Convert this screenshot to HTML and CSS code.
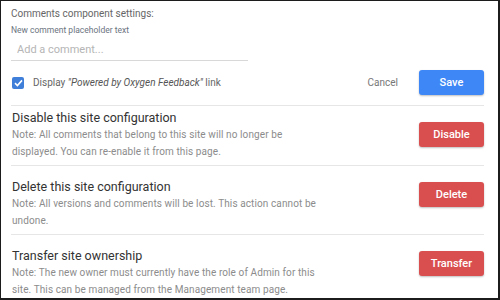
FILE: index.html
```html
<!DOCTYPE html>
<html lang="en">
<head>
    <meta charset="UTF-8">
    <meta name="viewport" content="width=device-width, initial-scale=1.0">
    <title>Site settings</title>
    <link rel="stylesheet" href="styles.css">
</head>
<body>
    <div class="frame">
        <div class="comments-settings">
            <div class="settings-title">Comments component settings:</div>
            <label class="field-label" for="placeholderInput">New comment placeholder text</label>
            <input type="text" id="placeholderInput" class="text-input" placeholder="Add a comment...">
            <div class="form-row">
                <label class="checkbox-label">
                    <span class="checkbox">
                        <svg width="9" height="8" viewBox="0 0 9 8"><path d="M1 4.2 L3.4 6.5 L8 1.4" fill="none" stroke="#fff" stroke-width="1.6"/></svg>
                    </span>
                    <span>Display <em>"Powered by Oxygen Feedback"</em> link</span>
                </label>
                <button class="btn-link">Cancel</button>
                <button class="btn btn-primary">Save</button>
            </div>
        </div>

        <div class="section section-first">
            <div class="section-text">
                <div class="section-title">Disable this site configuration</div>
                <p class="note">Note: All comments that belong to this site will no longer be displayed. You can re-enable it from this page.</p>
            </div>
            <button class="btn btn-danger">Disable</button>
        </div>

        <div class="section">
            <div class="section-text">
                <div class="section-title">Delete this site configuration</div>
                <p class="note">Note: All versions and comments will be lost. This action cannot be undone.</p>
            </div>
            <button class="btn btn-danger">Delete</button>
        </div>

        <div class="section">
            <div class="section-text">
                <div class="section-title">Transfer site ownership</div>
                <p class="note">Note: The new owner must currently have the role of Admin for this site. This can be managed from the Management team page.</p>
            </div>
            <button class="btn btn-danger">Transfer</button>
        </div>
    </div>
</body>
</html>
```

FILE: styles.css
```css
body {
    margin: 0;
    padding: 0;
    font-family: Roboto, "Liberation Sans", sans-serif;
    background-color: white;
}
.frame {
    box-sizing: border-box;
    width: 500px;
    height: 300px;
    overflow: hidden;
    border: 1px solid #1c1c1c;
    border-right-width: 2px;
    border-bottom-width: 2px;
    padding: 0 14px 0 10px;
}
.comments-settings {
    padding-top: 5px;
}
.settings-title {
    font-size: 10px;
    line-height: 15px;
    color: #666;
}
.field-label {
    display: block;
    font-size: 8.5px;
    line-height: 12px;
    margin-top: 3px;
    color: #6b7480;
}
.text-input {
    display: block;
    box-sizing: border-box;
    width: 237px;
    height: 23px;
    margin-top: 2px;
    padding: 0 6px;
    border: none;
    border-bottom: 1px solid #d8d8d8;
    font-family: inherit;
    font-size: 11px;
    color: #333;
    outline: none;
}
.text-input::placeholder {
    color: #b5b5b5;
}
.form-row {
    display: flex;
    align-items: center;
    margin-top: 9px;
    padding-bottom: 10px;
    border-bottom: 1px solid #e6e6e6;
}
.checkbox-label {
    display: flex;
    align-items: center;
    flex: 1;
    font-size: 10px;
    color: #666;
}
.checkbox-label em {
    color: #555;
}
.checkbox {
    display: flex;
    align-items: center;
    justify-content: center;
    width: 12px;
    height: 12px;
    margin: 0 9px 0 1px;
    border-radius: 2px;
    background-color: #3f7fd9;
}
.btn-link {
    background: none;
    border: none;
    padding: 0;
    margin-right: 21px;
    font-family: inherit;
    font-size: 10px;
    color: #777;
    cursor: pointer;
}
.btn {
    width: 65px;
    height: 25px;
    border: none;
    border-radius: 3px;
    font-family: inherit;
    font-size: 11px;
    font-weight: 500;
    color: white;
    cursor: pointer;
    box-shadow: 0 1px 2px rgba(0, 0, 0, 0.25);
}
.btn-primary {
    background-color: #3e87f6;
}
.btn-danger {
    flex-shrink: 0;
    margin-top: 4px;
    background-color: #d94f4f;
}
.section {
    display: flex;
    align-items: flex-start;
    justify-content: space-between;
    padding: 12px 0 5px 1px;
    border-bottom: 1px solid #e6e6e6;
}
.section-first {
    align-items: center;
    padding-top: 3px;
}
.section-first .btn-danger {
    margin-top: 0;
}
.section:last-child {
    border-bottom: none;
}
.section-text {
    width: 310px;
}
.section-title {
    font-size: 12.5px;
    line-height: 17px;
    color: #333;
}
.note {
    margin: 0;
    font-size: 10px;
    line-height: 17px;
    letter-spacing: 0.1px;
    color: #8c8c8c;
}
```
